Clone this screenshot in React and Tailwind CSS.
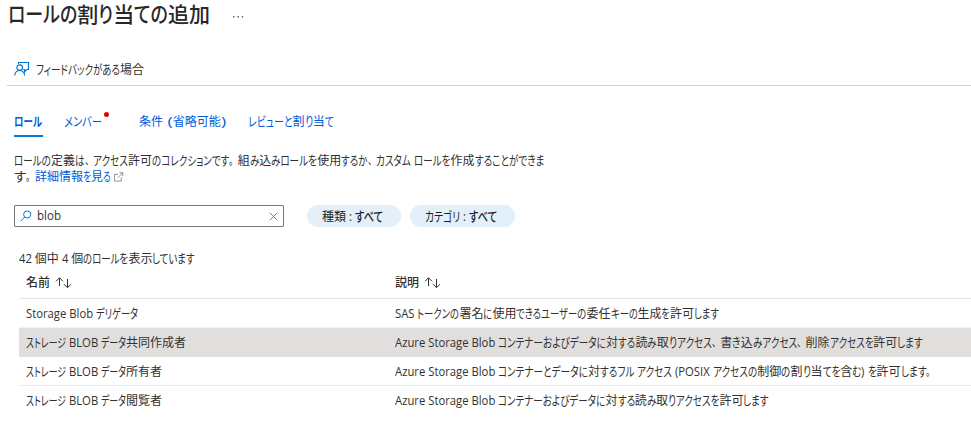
import { useLayoutEffect, useRef } from "react";

const RUNS = /([\u3001\u3002]|[\u3040-\u30ff]+|[\u0020-\u007e]+)/;

function kindOf(run) {
  if (/[\u3001\u3002]/.test(run)) return "punct";
  if (/[\u3040-\u30ff]/.test(run)) return "kana";
  if (/^[ -~]+$/.test(run)) return "latin";
  return "kanji";
}

// Text with condensed kana: kanji and Latin keep their proportions, kana runs
// share what is left of the width `w`. Without kana the Latin part takes it.
function Txt({ w, children, className = "" }) {
  const ref = useRef(null);
  const runs = children.split(RUNS).filter(Boolean);
  useLayoutEffect(() => {
    const fit = () => {
      const spans = [...ref.current.children];
      const factor = { kanji: 1, punct: 0.72, latin: 0.94, kana: 1 };
      const total = { kanji: 0, punct: 0, latin: 0, kana: 0 };
      const sizes = spans.map((s) => {
        const inner = s.firstChild;
        inner.style.transform = "none";
        s.style.width = "auto";
        const size = inner.getBoundingClientRect().width;
        total[s.dataset.kind] += size;
        return size;
      });
      const free = total.kana ? "kana" : "latin";
      if (total[free]) {
        let rest = w;
        for (const kind of Object.keys(total)) {
          if (kind !== free) rest -= total[kind] * factor[kind];
        }
        factor[free] = rest / total[free];
      }
      spans.forEach((s, i) => {
        const { kind } = s.dataset;
        const f = factor[kind];
        s.style.width = `${sizes[i] * f}px`;
        s.firstChild.style.transform = `scale(${f}, ${kind === "kana" ? 1.05 : 1})`;
      });
    };
    fit();
    document.fonts.ready.then(fit);
  }, [w, children]);
  return (
    <span ref={ref} className={`flex shrink-0 whitespace-pre ${className}`}>
      {runs.map((r, i) => {
        const kind = kindOf(r);
        return (
          <span key={i} data-kind={kind} className="block shrink-0">
            <span className={kind === "kana" ? "inline-block origin-left [font-feature-settings:'palt']" : "inline-block origin-left"}>{r}</span>
          </span>
        );
      })}
    </span>
  );
}

function SortIcon() {
  return (
    <svg width="16" height="12" viewBox="0 0 16 12" fill="none" stroke="#323130" strokeWidth="1">
      <path d="M4.5 9V.8M1 4.3L4.5.8 8 4.3M12.5 2v8.7M9 7.2l3.5 3.5L16 7.2" />
    </svg>
  );
}

const rows = [
  ["Storage Blob デリゲータ", 112, "SAS トークンの署名に使用できるユーザーの委任キーの生成を許可します", 324],
  ["ストレージ BLOB データ共同作成者", 160, "Azure Storage Blob コンテナーおよびデータに対する読み取りアクセス、書き込みアクセス、削除アクセスを許可します", 528],
  ["ストレージ BLOB データ所有者", 136, "Azure Storage Blob コンテナーとデータに対するフル アクセス (POSIX アクセスの制御の割り当てを含む) を許可します。", 540],
  ["ストレージ BLOB データ閲覧者", 136, "Azure Storage Blob コンテナーおよびデータに対する読み取りアクセスを許可します", 374],
];
const rowStyles = [
  "border-[#f3f2f1]",
  "bg-[#e1dfdd] border-[#e1dfdd]",
  "border-[#edebe9]",
  "border-transparent",
];

export default function App() {
  return (
    <div className="h-[430px] w-[971px] overflow-hidden bg-white font-['Open_Sans','Noto_Sans_CJK_JP',sans-serif] text-[12px] leading-4 text-[#323130]">
      <header className="flex h-[31px] items-center pl-[8px]">
        <h1 className="mb-[3px] text-[21px] font-medium leading-[30px] text-[#292827]">
          <Txt w={202}>ロールの割り当ての追加</Txt>
        </h1>
        <svg className="ml-[22px] mt-[2px]" width="13" height="4" fill="#605e5c">
          <path d="M1 1h1.4v1.4H1zM5.4 1h1.4v1.4H5.4zM9.8 1h1.4v1.4H9.8z" />
        </svg>
      </header>

      <div className="ml-[7px] mt-[22px] flex h-[33px] items-center border-b border-[#d2d0ce] pl-[7px]">
        <svg width="16" height="16" viewBox="0 0 16 16" fill="none" stroke="#0078d4" strokeWidth="1.15">
          <path d="M4.5 3V1.5h10v7h-1.8L10.5 11V8.5H9.3" />
          <circle cx="5.7" cy="6.6" r="2.8" />
          <path d="M.7 14.5c.3-3 2.3-5 5-5s4.6 2 5 5" />
        </svg>
        <Txt w={108} className="ml-[6px] mt-[2px]">フィードバックがある場合</Txt>
      </div>

      <nav className="ml-[14px] mt-[21px] flex h-[30px] leading-[30px] text-[#015cda]">
        <div className="h-[30px] w-[29px] border-b-2 border-[#0078d4] font-semibold">
          <Txt w={28}>ロール</Txt>
        </div>
        <div className="ml-[21px] flex w-[75px]">
          <Txt w={38}>メンバー</Txt>
          <span className="ml-[2px] mt-[5px] h-[5px] w-[5px] rounded-full bg-[#e80000]" />
        </div>
        <Txt w={87}>条件 (省略可能)</Txt>
        <Txt w={86} className="ml-[22px]">レビューと割り当て</Txt>
      </nav>

      <div className="ml-[14px] mt-[16px]">
        <Txt w={530}>ロールの定義は、アクセス許可のコレクションです。組み込みロールを使用するか、カスタム ロールを作成することができま</Txt>
        <div className="flex items-center">
          <Txt w={21}>す。</Txt>
          <Txt w={76} className="text-[#015cda]">詳細情報を見る</Txt>
          <svg className="ml-[3px]" width="10" height="10" viewBox="0 0 11 11" fill="none" stroke="#797775" strokeWidth=".9">
            <path d="M4.5 2.5h-4v7.5h7.5V6M6 .8h3.7v3.7M9.5 1L4.2 6.3" />
          </svg>
        </div>
      </div>

      <div className="ml-[14px] mt-[20px] flex h-[22px]">
        <div className="flex w-[270px] items-center rounded-[1px] border border-[#7a7876] pl-[5px] pr-[5px]">
          <svg width="12" height="12" viewBox="0 0 12 12" fill="none" stroke="#0078d4" strokeWidth="1">
            <circle cx="7.2" cy="4.5" r="3.6" />
            <path d="M4.7 7.1L.6 11.2" />
          </svg>
          <span className="ml-[5px] flex-1">
            <Txt w={24}>blob</Txt>
          </span>
          <svg width="9" height="9" viewBox="0 0 9 9" stroke="#797775" strokeWidth=".9">
            <path d="M.7.7l7.6 7.6M8.3.7L.7 8.3" />
          </svg>
        </div>
        <div className="ml-[23px] flex w-[94px] items-center rounded-full bg-[#e3f0fa] pl-[15px] pt-[2px] text-[#201f1e]">
          <Txt w={33}>種類 : </Txt>
          <Txt w={28} className="font-medium">すべて</Txt>
        </div>
        <div className="ml-[9px] flex w-[105px] items-center rounded-full bg-[#e3f0fa] pl-[15px] pt-[2px] text-[#201f1e]">
          <Txt w={44}>カテゴリ : </Txt>
          <Txt w={28} className="font-medium">すべて</Txt>
        </div>
      </div>

      <div className="ml-[19px] mt-[24px] flex h-[16px]">
        <Txt w={176}>42 個中 4 個のロールを表示しています</Txt>
      </div>

      <div className="ml-[19px]">
        <div className="flex h-[32px] border-b border-[#e7e5e3] pl-[7px] pt-[8px] font-medium">
          <div className="flex h-4 w-[369px] items-center gap-[5px]">
            <Txt w={24}>名前</Txt>
            <SortIcon />
          </div>
          <div className="flex h-4 items-center gap-[5px]">
            <Txt w={24}>説明</Txt>
            <SortIcon />
          </div>
        </div>
        {rows.map(([name, nw, desc, dw], i) => (
          <div key={name} className={`flex h-[29px] items-center border-b pl-[7px] pt-[2px] ${rowStyles[i]}`}>
            <div className="w-[369px]">
              <Txt w={nw}>{name}</Txt>
            </div>
            <Txt w={dw}>{desc}</Txt>
          </div>
        ))}
      </div>
    </div>
  );
}
